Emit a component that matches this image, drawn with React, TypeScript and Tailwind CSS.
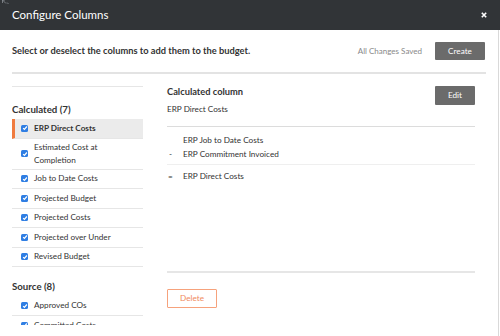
import React from 'react';

const calculated = [
  { label: 'ERP Direct Costs', active: true },
  { label: 'Estimated Cost at Completion', wrap: true },
  { label: 'Job to Date Costs' },
  { label: 'Projected Budget' },
  { label: 'Projected Costs' },
  { label: 'Projected over Under' },
  { label: 'Revised Budget' },
];

const source = ['Approved COs', 'Committed Costs'];

const Check = () => (
  <span className="w-[7px] h-[7px] rounded-[1.5px] bg-[#2f7ee3] flex items-center justify-center shrink-0">
    <svg width="6" height="6" viewBox="0 0 8 8">
      <path d="M1.5 4.2 L3.2 5.8 L6.5 2" fill="none" stroke="white" strokeWidth="1.6" />
    </svg>
  </span>
);

const Row = ({ label, active, wrap }: { label: string; active?: boolean; wrap?: boolean }) => (
  <div
    className={`flex items-center border-b border-[#e6e6e6] ${active ? 'bg-[#ebebeb] border-l-[3px] border-l-[#f07b3f] pl-[6px]' : 'pl-[9px]'} ${wrap ? 'h-[31px]' : 'h-[19.5px]'}`}
  >
    <Check />
    <span className={`ml-[6px] text-[8.2px] text-[#333] ${active ? 'font-bold' : ''} ${wrap ? 'leading-[12.5px] w-[70px]' : 'leading-[11px]'}`}>
      {label}
    </span>
  </div>
);

export default function App() {
  return (
    <div className="w-[500px] h-[336px] overflow-hidden bg-white relative" style={{ fontFamily: 'Lato, "Open Sans", sans-serif' }}>
      <div className="h-[30px] bg-[#313437] flex items-center justify-between pl-[12px] pr-[13px]">
        <span className="text-white text-[11.5px] leading-none">Configure Columns</span>
        <svg width="6" height="6" viewBox="0 0 6 6">
          <path d="M0.8 0.8 L5.2 5.2 M5.2 0.8 L0.8 5.2" stroke="white" strokeWidth="1.6" />
        </svg>
      </div>
      <svg className="absolute left-[2px] top-0" width="7" height="5" viewBox="0 0 7 5">
        <path d="M0.5 0 L0.5 3 M0.5 0 L3 0 M0.5 0 L4 3.5 M5 2.5 L6.5 4" fill="none" stroke="#8c9196" strokeWidth="0.8" />
      </svg>

      <div className="h-[306px] border-r border-[#d9d9d9] w-[499px] px-[12px]">
        <div className="flex items-center justify-between h-[44px] border-b-2 border-[#e3e3e3] pr-[1px]">
          <span className="text-[9.3px] font-bold text-[#333]">Select or deselect the columns to add them to the budget.</span>
          <div className="flex items-center">
            <span className="text-[8px] text-[#888] mr-[13px]">All Changes Saved</span>
            <span className="w-[50px] h-[18px] bg-[#6b6b6b] text-white text-[8.2px] flex items-center justify-center rounded-[1px]">Create</span>
          </div>
        </div>

        <div className="flex">
          <div className="w-[131px] h-[239px] overflow-hidden mt-[12px] border-t border-[#e6e6e6]">
            <div className="text-[9.7px] font-bold text-[#333] mt-[15px] mb-[3px] leading-[14px]">Calculated (7)</div>
            {calculated.map((c) => (
              <Row key={c.label} {...c} />
            ))}
            <div className="text-[9.7px] font-bold text-[#333] mt-[12px] mb-[3.5px] leading-[14px]">Source (8)</div>
            {source.map((s) => (
              <Row key={s} label={s} />
            ))}
          </div>

          <div className="ml-[24px] w-[308px] flex flex-col">
            <div className="flex justify-between items-start">
              <div className="pt-[11px]">
                <div className="text-[9.3px] font-bold text-[#333] leading-[14px]">Calculated column</div>
                <div className="text-[8.2px] text-[#333] leading-[14px] mt-[3px]">ERP Direct Costs</div>
              </div>
              <span className="mt-[12px] w-[40px] h-[19px] bg-[#6b6b6b] text-white text-[8.2px] flex items-center justify-center rounded-[1px]">Edit</span>
            </div>
            <div className="mt-[10px] border-b border-[#dcdcdc]"></div>
            <div className="pt-[6px] text-[8.2px] text-[#333] leading-[14px]">
              <div className="flex"><span className="w-[16px]"></span>ERP Job to Date Costs</div>
              <div className="flex"><span className="w-[16px] pl-[2px]">-</span>ERP Commitment Invoiced</div>
            </div>
            <div className="mt-[3px] border-b border-[#efefef]"></div>
            <div className="pt-[4px] text-[8.2px] text-[#333] leading-[14px] flex">
              <span className="w-[16px] pl-[1px]">=</span>ERP Direct Costs
            </div>
            <div className="mt-[88px] border-b-2 border-[#e6e6e6]"></div>
            <span className="mt-[16px] w-[50px] h-[19px] border border-[#f6a27c] text-[#f08a5d] text-[8.2px] flex items-center justify-center rounded-[1px]">Delete</span>
          </div>
        </div>
      </div>
    </div>
  );
}
